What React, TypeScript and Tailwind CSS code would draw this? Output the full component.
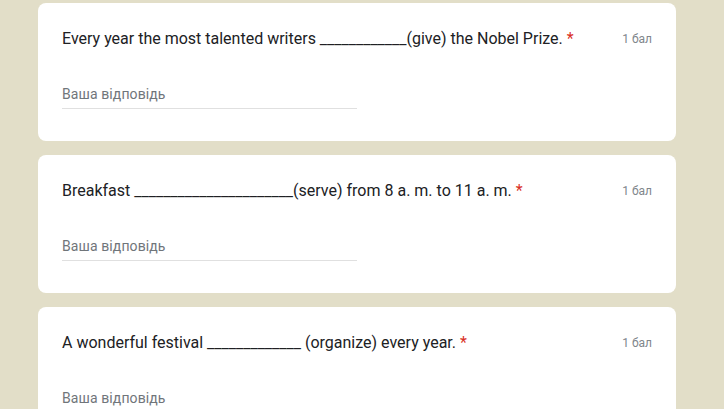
import React from "react";

const questions = [
  "Every year the most talented writers ____________(give) the Nobel Prize.",
  "Breakfast ______________________(serve) from 8 a. m. to 11 a. m.",
  "A wonderful festival _____________ (organize) every year.",
];

function Card({ q }: { q: string }) {
  return (
    <div className="bg-white rounded-lg px-6 pt-6 pb-8 w-[638px]">
      <div className="flex justify-between items-start">
        <div className="text-[16px] leading-6 text-[#202124]">
          {q}
          <span className="text-[#d93025]"> *</span>
        </div>
        <div className="text-[12px] leading-6 text-[#80868b] pl-4 whitespace-nowrap">1 бал</div>
      </div>
      <div className="mt-[25px] w-[295px] pt-2 pb-1 border-b border-[#e0e0e0]">
        <div className="text-[14px] leading-5 text-[#70757a] tracking-[0.1px]">Ваша відповідь</div>
      </div>
    </div>
  );
}

export default function App() {
  return (
    <div
      className="w-[724px] h-[409px] overflow-hidden bg-[#e2dec8] flex flex-col items-start pl-[38px] pt-[3px] gap-[14px]"
      style={{ fontFamily: "Roboto, 'Noto Sans', sans-serif" }}
    >
      {questions.map((q, i) => (
        <div key={i} className="shrink-0">
          <Card q={q} />
        </div>
      ))}
    </div>
  );
}
